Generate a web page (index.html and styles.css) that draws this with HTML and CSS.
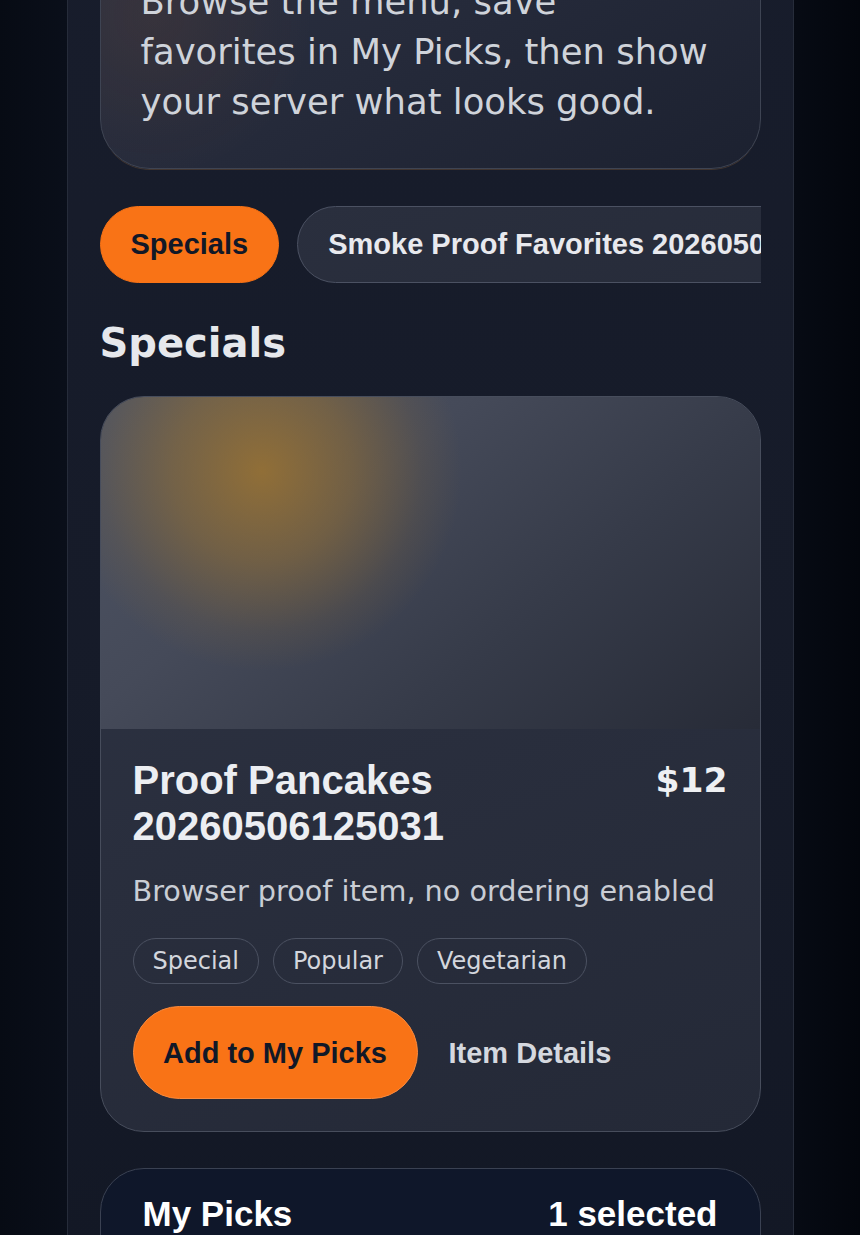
FILE: index.html
```html
<!DOCTYPE html>
<html lang="en">
<head>
<meta charset="utf-8">
<meta name="viewport" content="width=device-width, initial-scale=1">
<title>Smoke Proof Cafe — Menu</title>
<link rel="stylesheet" href="styles.css">
</head>
<body>
<main class="shell">
  <header class="hero">
    <p class="eyebrow">Smoke Proof Cafe</p>
    <h1 class="hero-title">Digital Menu</h1>
    <p class="hero-text">Browse the menu, save favorites in My Picks, then show your server what looks good.</p>
  </header>

  <nav class="tabs" aria-label="Menu sections">
    <button class="tab tab-active" type="button">Specials</button>
    <button class="tab" type="button">Smoke Proof Favorites 20260506125031</button>
  </nav>

  <section class="menu-section">
    <h2 class="section-title">Specials</h2>
    <article class="item-card">
      <div class="item-image" aria-hidden="true"></div>
      <div class="item-body">
        <div class="item-head">
          <h3 class="item-name">Proof Pancakes 20260506125031</h3>
          <span class="item-price">$12</span>
        </div>
        <p class="item-desc">Browser proof item, no ordering enabled</p>
        <ul class="tags">
          <li class="tag">Special</li>
          <li class="tag">Popular</li>
          <li class="tag">Vegetarian</li>
        </ul>
        <div class="actions">
          <button class="btn-primary" type="button">Add to My Picks</button>
          <button class="btn-link" type="button">Item Details</button>
        </div>
      </div>
    </article>
  </section>

  <section class="picks">
    <div class="picks-head">
      <h2 class="picks-title">My Picks</h2>
      <span class="picks-count">1 selected</span>
    </div>
    <ul class="picks-list">
      <li class="pick-row"><span>Proof Pancakes 20260506125031</span><span>$12</span></li>
    </ul>
    <p class="picks-note">Show this list to your server when you are ready.</p>
  </section>
</main>
<script src="script.js"></script>
</body>
</html>
```

FILE: styles.css
```css
html {
  scroll-behavior: auto;
}

body {
  margin: 0;
  min-height: 100vh;
  background: linear-gradient(90deg, #070b14 0%, #0a0f1a 8%, #0c111c 50%, #070b14 92%, #03060d 100%);
  font-family: "DejaVu Sans", sans-serif;
  color: #d1d5db;
}

.shell {
  box-sizing: border-box;
  width: 727px;
  margin: 0 auto;
  min-height: 100vh;
  padding: 32px 32px 60px;
  border-left: 1px solid #262c3a;
  border-right: 1px solid #262c3a;
  background: linear-gradient(180deg, #181d2c 0%, #161b29 50%, #121724 100%);
  display: flex;
  flex-direction: column;
  gap: 36px;
}

/* Hero */
.hero {
  border: 1px solid #3e4453;
  border-radius: 50px;
  padding: 40px 40px 41px;
  background:
    radial-gradient(circle at 8% 55%, rgba(249, 115, 22, 0.07), rgba(249, 115, 22, 0) 160px),
    linear-gradient(150deg, #2d3344 0%, #252a3a 55%, #1c2130 100%);
  box-shadow: 0 2px 0 -1px rgba(160, 110, 60, 0.3);
}

.eyebrow {
  margin: 0 0 10px;
  font-family: "Liberation Sans", Arial, sans-serif;
  font-weight: 700;
  font-size: 22px;
  letter-spacing: 0.12em;
  text-transform: uppercase;
  color: #f97316;
}

.hero-title {
  margin: 0 0 16px;
  font-family: "DejaVu Sans", sans-serif;
  font-weight: 700;
  font-size: 48px;
  line-height: 1.15;
  color: #eceef2;
}

.hero-text {
  margin: 0;
  max-width: 568px;
  font-size: 35.4px;
  line-height: 50px;
  color: #cfd3da;
}

/* Tabs */
.tabs {
  display: flex;
  gap: 18px;
  margin-top: 1px;
  overflow-x: auto;
  scrollbar-width: none;
}

.tabs::-webkit-scrollbar {
  display: none;
}

.tab {
  flex: none;
  white-space: nowrap;
  font-family: "Liberation Sans", Arial, sans-serif;
  font-weight: 700;
  font-size: 29px;
  line-height: 33px;
  padding: 21px 30px;
  border-radius: 999px;
  border: 1px solid #4b5162;
  background: linear-gradient(160deg, #2a2f3e, #262b39);
  color: #e8e9ee;
  cursor: pointer;
}

.tab-active {
  background: #f97316;
  border-color: #f97316;
  color: #111827;
}

/* Section */
.menu-section {
  display: flex;
  flex-direction: column;
  gap: 29px;
}

.section-title {
  margin: 0;
  font-family: "DejaVu Sans", sans-serif;
  font-weight: 700;
  font-size: 40px;
  line-height: 48px;
  color: #e6e8ec;
}

.item-card {
  border: 1px solid #474d5c;
  border-radius: 44px;
  overflow: hidden;
  background: linear-gradient(160deg, #2e3444 0%, #292e3d 50%, #242937 100%);
}

.item-image {
  height: 332px;
  background:
    radial-gradient(circle at 161px 74px, rgba(165, 120, 45, 0.78) 0px, rgba(165, 120, 45, 0.45) 90px, rgba(165, 120, 45, 0.12) 160px, rgba(165, 120, 45, 0) 200px),
    linear-gradient(140deg, #4e5463 0%, #454a59 35%, #363b49 65%, #272b37 100%);
}

.item-body {
  padding: 28px 32px 32px;
  display: flex;
  flex-direction: column;
}

.item-head {
  display: flex;
  justify-content: space-between;
  align-items: flex-start;
  gap: 24px;
}

.item-name {
  margin: 0;
  font-family: "Liberation Sans", Arial, sans-serif;
  font-weight: 700;
  font-size: 40px;
  line-height: 46px;
  color: #eceef2;
  max-width: 480px;
}

.item-price {
  font-family: "DejaVu Sans", sans-serif;
  font-weight: 700;
  font-size: 34.5px;
  line-height: 46px;
  color: #eef0f3;
  white-space: nowrap;
}

.item-desc {
  margin: 22px 0 0;
  font-size: 28.7px;
  line-height: 40px;
  color: #c9cdd5;
}

.tags {
  list-style: none;
  margin: 27px 0 0;
  padding: 0;
  display: flex;
  gap: 14px;
}

.tag {
  font-size: 24px;
  line-height: 28px;
  padding: 8px 19px;
  border: 1px solid #4b5161;
  border-radius: 999px;
  color: #d3d6dd;
}

.actions {
  margin-top: 22px;
  display: flex;
  align-items: center;
  gap: 31px;
}

.btn-primary {
  font-family: "Liberation Sans", Arial, sans-serif;
  font-weight: 700;
  font-size: 29px;
  line-height: 32px;
  padding: 29.5px 29.5px;
  border: 1px solid #fb8a3c;
  border-radius: 999px;
  background: #f97316;
  color: #111827;
  cursor: pointer;
}

.btn-link {
  font-family: "Liberation Sans", Arial, sans-serif;
  font-weight: 700;
  font-size: 29px;
  line-height: 32px;
  padding: 0;
  border: 0;
  background: none;
  color: #d5d8df;
  cursor: pointer;
}

/* My Picks */
.picks {
  border: 1px solid #3a4152;
  border-radius: 44px;
  padding: 24px 42px 36px;
  background: #0f172a;
}

.picks-head {
  display: flex;
  justify-content: space-between;
  align-items: baseline;
}

.picks-title {
  margin: 0;
  font-family: "Liberation Sans", Arial, sans-serif;
  font-weight: 700;
  font-size: 35px;
  line-height: 42px;
  color: #ffffff;
}

.picks-count {
  font-family: "Liberation Sans", Arial, sans-serif;
  font-weight: 700;
  font-size: 35px;
  line-height: 42px;
  color: #ffffff;
}

.picks-list {
  list-style: none;
  margin: 24px 0 0;
  padding: 0;
}

.pick-row {
  display: flex;
  justify-content: space-between;
  padding: 18px 0;
  border-top: 1px solid #2a3246;
  font-size: 26px;
  color: #d1d5db;
}

.picks-note {
  margin: 16px 0 0;
  font-size: 22px;
  color: #9aa1ae;
}
```

FILE: script.js
```js
(function () {
  function place() {
    var p = document.querySelector('.hero-text');
    if (!p) return;
    var top = p.getBoundingClientRect().top + window.scrollY;
    window.scrollTo(0, Math.round(top + 23));
  }
  place();
  window.addEventListener('load', place);
})();
```
